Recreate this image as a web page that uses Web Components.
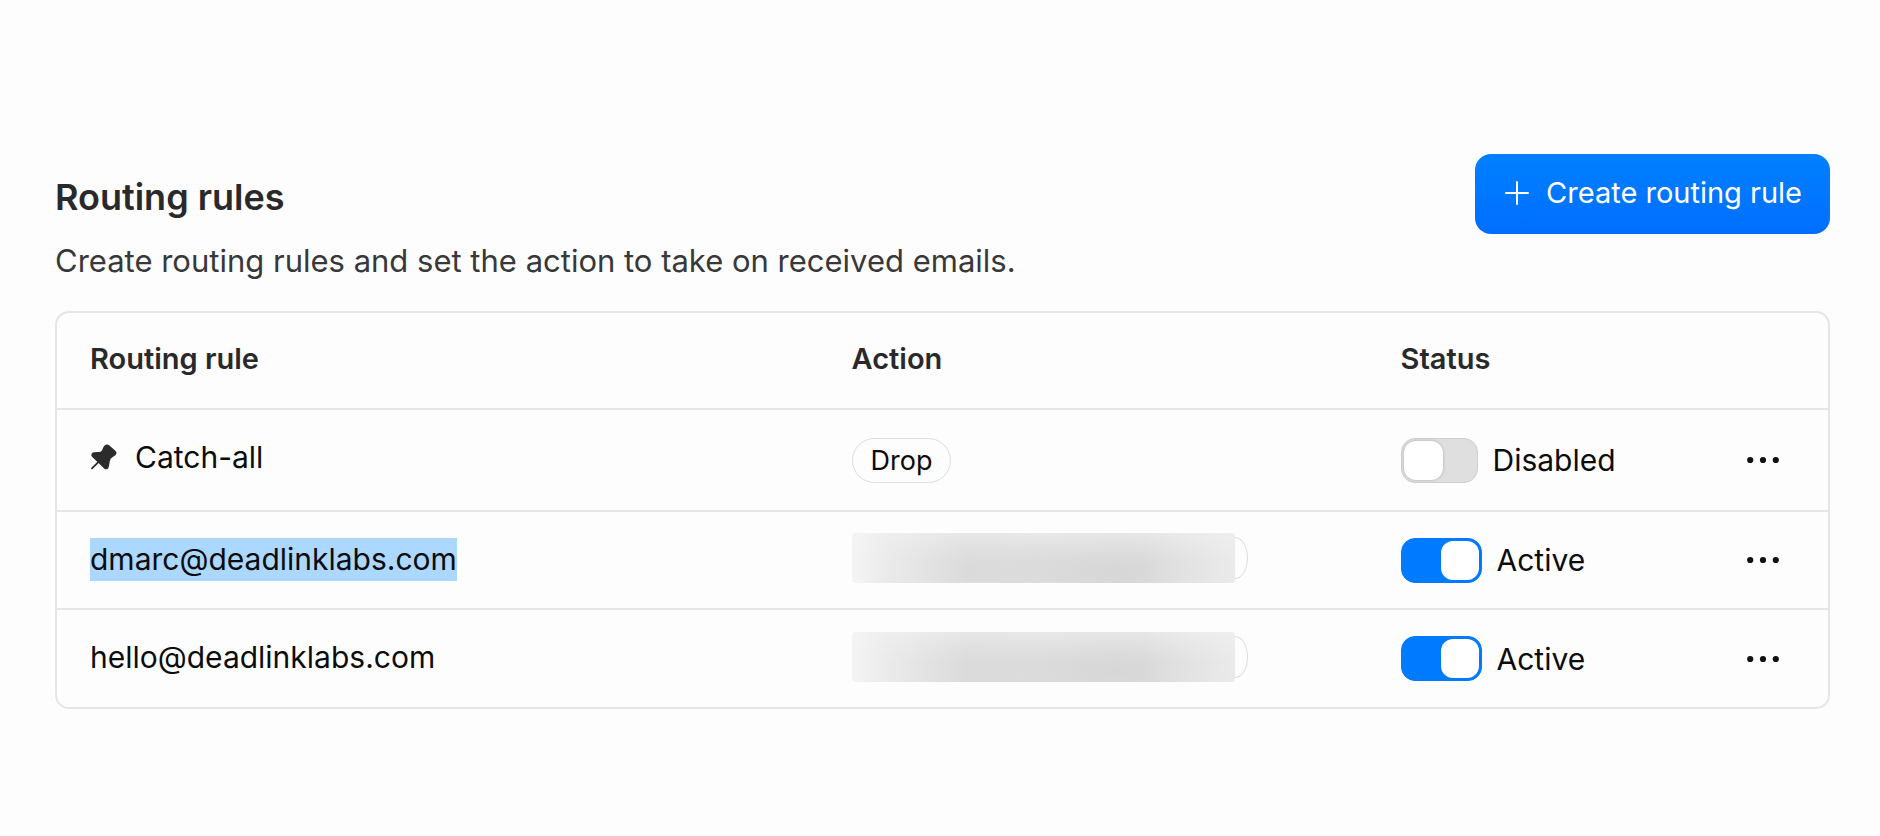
<!DOCTYPE html>
<html lang="en">
<head>
<meta charset="utf-8">
<meta name="viewport" content="width=device-width, initial-scale=1">
<title>Routing rules</title>
<style>
  body {
    margin: 0;
    background: #fdfdfd;
    color: #0c0c0d;
    font: 400 30px/44px Inter, "Liberation Sans", sans-serif;
  }
</style>
</head>
<body>
<routing-page></routing-page>

<script>
  const define = (name, html, setup) => {
    const template = document.createElement('template');
    template.innerHTML = html;
    customElements.define(name, class extends HTMLElement {
      constructor() {
        super();
        this.attachShadow({ mode: 'open' }).append(template.content.cloneNode(true));
      }
      connectedCallback() {
        if (setup) setup(this, this.shadowRoot);
      }
    });
  };

  /* Blue call-to-action button with a leading plus */
  define('primary-button', `
    <style>
      :host { display: block; }
      button {
        display: flex; align-items: center; gap: 16px;
        height: 80px; padding: 0 28px 2px 29px; border: 0; border-radius: 16px;
        background: linear-gradient(#0080ff, #006eff);
        color: #fff; font: inherit; font-size: 29px; white-space: nowrap; cursor: pointer;
      }
      svg { display: block; width: 26px; height: 26px; }
    </style>
    <button type="button">
      <svg viewBox="0 0 26 26" fill="none" stroke="currentColor" stroke-width="2" stroke-linecap="round" aria-hidden="true"><path d="M13 2v22M2 13h22"/></svg>
      <slot></slot>
    </button>`);

  /* Title and description on the left, actions on the right */
  define('section-header', `
    <style>
      :host { display: flex; justify-content: space-between; align-items: flex-start; gap: 32px; }
      .text { padding-top: 21px; }
      h1 { margin: 0; color: #29292b; font-size: 36px; line-height: 44px; font-weight: 600; }
      p { margin: 20px 0 0; color: #38383a; font-size: 31px; }
    </style>
    <div class="text">
      <h1><slot name="title"></slot></h1>
      <p><slot></slot></p>
    </div>
    <slot name="action"></slot>`);

  define('action-chip', `
    <style>
      :host {
        display: block; box-sizing: border-box; width: fit-content; height: 45px; padding: 0 18px;
        border: 1px solid #dedede; border-radius: 23px;
        font-size: 27px; line-height: 43px; white-space: nowrap;
      }
    </style>
    <slot></slot>`);

  /* A chip whose destination address is hidden behind a smudge */
  define('redacted-chip', `
    <style>
      :host { display: flex; max-width: 396px; padding-bottom: 4px; }
      .smudge {
        flex: 1; height: 50px; border-radius: 4px;
        background:
          linear-gradient(90deg, #f4f4f4, #f0f0f0aa 10%, #f0f0f000 30%, #f4f4f400 76%, #f0f0f0aa),
          radial-gradient(ellipse 130px 50px at 30% 85%, #d8d8d8aa, #d8d8d844 60%, #d8d8d800),
          radial-gradient(ellipse 120px 50px at 69% 80%, #d2d2d2aa, #d2d2d233 60%, #d2d2d200),
          linear-gradient(#e9e9e9, #dedede 60%, #dfdfdf);
      }
      .cap {
        align-self: center; box-sizing: border-box; width: 13px; height: 42px;
        border: 1px solid #dcdcdc; border-left: 0; border-radius: 0 13px 13px 0 / 0 21px 21px 0;
      }
    </style>
    <div class="smudge" role="img" aria-label="Hidden address"></div><div class="cap"></div>`);

  define('status-switch', `
    <style>
      :host { display: block; }
      label { display: flex; width: fit-content; align-items: center; gap: 15px; cursor: pointer; }
      input {
        appearance: none; box-sizing: border-box; display: flex; margin: 0;
        width: 77px; height: 45px; padding: 2px; border-radius: 14px;
        background: #dfdfdf; border: 1px solid #cfcfcf; cursor: pointer;
      }
      input::before {
        content: ""; width: 39px; height: 39px; border-radius: 12px;
        background: #fff; box-shadow: 0 0 3px #aaa;
      }
      input:checked { width: 81px; justify-content: flex-end; background: #007bff; border-color: #007bff; }
      input:checked::before { width: 38px; box-shadow: none; }
    </style>
    <label><input type="checkbox" role="switch"><span><slot></slot></span></label>`,
    (host, root) => { root.querySelector('input').checked = host.hasAttribute('on'); });

  define('more-button', `
    <style>
      :host { display: block; }
      button { display: block; margin: 0 0 0 auto; padding: 8px; border: 0; background: none; color: #111; cursor: pointer; }
      svg { display: block; width: 32px; height: 8px; }
    </style>
    <button type="button" aria-label="More actions">
      <svg viewBox="0 0 32 8" fill="currentColor"><circle cx="3.2" cy="4" r="3.1"/><circle cx="16" cy="4" r="3.1"/><circle cx="28.8" cy="4" r="3.1"/></svg>
    </button>`);

  define('rule-name', `
    <style>
      :host { display: flex; align-items: center; gap: 18px; padding-bottom: 2px; }
      :host([pinned]) { padding-bottom: 6px; }
      :host([selected]) span { background: #acd7ff; }
      span { display: block; line-height: 43px; }
      svg { display: none; width: 27px; height: 26px; color: #2b2b2c; }
      :host([pinned]) svg { display: block; }
    </style>
    <svg viewBox="0 0 27 26" aria-hidden="true">
      <path d="M2 24.4 9 17.4" stroke="currentColor" stroke-width="1.8" stroke-linecap="round"/>
      <path fill="currentColor" d="M14.6 1.6Q17 -.4 19.4 1.4L25.4 6.8Q27.4 9 25.8 10.8Q24.6 12.2 22.4 13.2Q20.2 14.4 19.8 17Q19.4 20.6 18.6 23.4Q17.2 26.4 14.4 24.8L2 12.8Q.4 10.2 2.8 8.6Q5.6 7.6 8.6 8Q11.4 8.2 12.2 6Q12.9 3.2 14.6 1.6Z"/>
    </svg>
    <span><slot></slot></span>`);

  define('rules-table', `
    <style>
      :host { display: block; border: 2px solid #e6e6e6; border-radius: 14px; }
      table { width: 100%; border-collapse: collapse; table-layout: fixed; }
      th, td { box-sizing: border-box; padding: 0 0 0 33px; text-align: left; vertical-align: middle; }
      th { height: 96px; padding-bottom: 4px; color: #29292b; font-size: 29px; font-weight: 600; }
      tbody td { height: 98px; border-top: 2px solid #e6e6e6; }
      tbody .tall td { height: 102px; }
      td:last-child { padding: 0 41px 0 0; }
      .rule { width: 43%; }
      .action { width: 31%; }
      .status { width: 18%; }
    </style>
    <table>
      <thead>
        <tr><th class="rule" scope="col">Routing rule</th><th class="action" scope="col">Action</th><th class="status" scope="col">Status</th><td></td></tr>
      </thead>
      <tbody>
        <tr class="tall">
          <td><rule-name pinned>Catch-all</rule-name></td>
          <td><action-chip>Drop</action-chip></td>
          <td><status-switch>Disabled</status-switch></td>
          <td><more-button></more-button></td>
        </tr>
        <tr>
          <td><rule-name selected>dmarc@deadlinklabs.com</rule-name></td>
          <td><redacted-chip></redacted-chip></td>
          <td><status-switch on>Active</status-switch></td>
          <td><more-button></more-button></td>
        </tr>
        <tr>
          <td><rule-name>hello@deadlinklabs.com</rule-name></td>
          <td><redacted-chip></redacted-chip></td>
          <td><status-switch on>Active</status-switch></td>
          <td><more-button></more-button></td>
        </tr>
      </tbody>
    </table>`);

  define('routing-page', `
    <style>
      :host { display: block; padding: 154px 50px 126px 55px; }
      rules-table { margin-top: 28px; }
    </style>
    <main>
      <section-header>
        <span slot="title">Routing rules</span>
        Create routing rules and set the action to take on received emails.
        <primary-button slot="action">Create routing rule</primary-button>
      </section-header>
      <rules-table></rules-table>
    </main>`);
</script>
</body>
</html>
